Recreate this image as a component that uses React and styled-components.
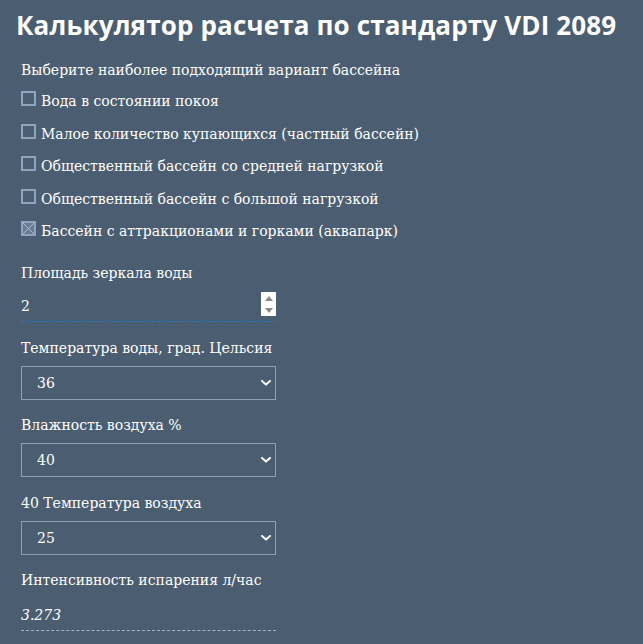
import React, { useState } from "react";
import styled, { createGlobalStyle } from "styled-components";

const GlobalStyle = createGlobalStyle`
  html, body {
    margin: 0;
    padding: 0;
    background: #4b5d70;
  }
  body {
    font-family: "DejaVu Serif", serif;
    color: #ffffff;
  }
`;

const options = [
  "Вода в состоянии покоя",
  "Малое количество купающихся (частный бассейн)",
  "Общественный бассейн со средней нагрузкой",
  "Общественный бассейн с большой нагрузкой",
  "Бассейн с аттракционами и горками (аквапарк)",
];

export default function App() {
  const [checked, setChecked] = useState(4);
  const [area, setArea] = useState("2");
  const [water, setWater] = useState("36");
  const [humidity, setHumidity] = useState("40");
  const [air, setAir] = useState("25");

  return (
    <>
      <GlobalStyle />
      <Page>
        <Title>Калькулятор расчета по стандарту VDI 2089</Title>
        <Form>
          <Prompt>Выберите наиболее подходящий вариант бассейна</Prompt>
          <Options>
            {options.map((text, i) => (
              <Option key={text}>
                <Box
                  type="checkbox"
                  checked={checked === i}
                  onChange={() => setChecked(i)}
                />
                <span>{text}</span>
              </Option>
            ))}
          </Options>

          <Field $first>
            <Label>Площадь зеркала воды</Label>
            <NumberRow>
              <NumberInput
                value={area}
                onChange={(e) => setArea(e.target.value)}
              />
              <Spinner>
                <Arrow $up />
                <Arrow />
              </Spinner>
            </NumberRow>
          </Field>

          <Field>
            <Label>Температура воды, град. Цельсия</Label>
            <SelectWrap>
              <Select value={water} onChange={(e) => setWater(e.target.value)}>
                {["26", "28", "30", "32", "34", "36"].map((v) => (
                  <option key={v}>{v}</option>
                ))}
              </Select>
              <Chevron />
            </SelectWrap>
          </Field>

          <Field>
            <Label>Влажность воздуха %</Label>
            <SelectWrap>
              <Select
                value={humidity}
                onChange={(e) => setHumidity(e.target.value)}
              >
                {["40", "50", "60", "70"].map((v) => (
                  <option key={v}>{v}</option>
                ))}
              </Select>
              <Chevron />
            </SelectWrap>
          </Field>

          <Field>
            <Label>{humidity} Температура воздуха</Label>
            <SelectWrap>
              <Select value={air} onChange={(e) => setAir(e.target.value)}>
                {["25", "26", "28", "30", "32"].map((v) => (
                  <option key={v}>{v}</option>
                ))}
              </Select>
              <Chevron />
            </SelectWrap>
          </Field>

          <Field>
            <Label>Интенсивность испарения л/час</Label>
            <Result>3.273</Result>
          </Field>
        </Form>
      </Page>
    </>
  );
}

function Chevron() {
  return (
    <ChevronIcon viewBox="0 0 10 6" aria-hidden="true">
      <path
        d="M1 1 L5 4.6 L9 1"
        fill="none"
        stroke="#ffffff"
        strokeWidth="2"
        strokeLinecap="round"
        strokeLinejoin="round"
      />
    </ChevronIcon>
  );
}

const Page = styled.div`
  padding: 9px 16px 20px;
`;

const Title = styled.h1`
  margin: 0;
  font-family: "Open Sans", "Noto Sans", sans-serif;
  font-weight: 700;
  font-size: 26px;
  line-height: 32px;
  color: #ffffff;
  letter-spacing: 0.15px;
`;

const Form = styled.div`
  padding-left: 5px;
  margin-top: 19px;
  font-size: 14px;
  line-height: 20px;
`;

const Prompt = styled.div`
  margin-bottom: 11px;
`;

const Options = styled.div`
  display: flex;
  flex-direction: column;
  gap: 12.5px;
`;

const Option = styled.label`
  display: flex;
  align-items: flex-end;
  gap: 5px;
  height: 20px;
  cursor: pointer;
`;

const Box = styled.input`
  appearance: none;
  margin: 0 0 5px;
  width: 15px;
  height: 15px;
  box-sizing: border-box;
  border: 2px solid #8ea5c0;
  background: transparent;
  flex: none;
  cursor: pointer;

  &:checked {
    background: #687d94;
    background-image: linear-gradient(
        45deg,
        transparent calc(50% - 0.6px),
        #a9bbd0 calc(50% - 0.6px),
        #a9bbd0 calc(50% + 0.6px),
        transparent calc(50% + 0.6px)
      ),
      linear-gradient(
        -45deg,
        transparent calc(50% - 0.6px),
        #a9bbd0 calc(50% - 0.6px),
        #a9bbd0 calc(50% + 0.6px),
        transparent calc(50% + 0.6px)
      );
  }
`;

const Field = styled.div`
  margin-top: ${(p) => (p.$first ? "22px" : "15.5px")};
  width: 255px;
`;

const Label = styled.div`
  margin-bottom: 8px;
  white-space: nowrap;
`;

const NumberRow = styled.div`
  display: flex;
  align-items: center;
  margin-top: 4px;
  height: 30px;
  border-bottom: 1px dashed #1e78cc;
`;

const NumberInput = styled.input`
  flex: 1;
  min-width: 0;
  border: 0;
  padding: 0;
  margin: 0;
  background: transparent;
  color: #ffffff;
  font-family: inherit;
  font-size: 14px;
  outline: none;
`;

const Spinner = styled.div`
  display: flex;
  flex-direction: column;
  justify-content: space-around;
  align-items: center;
  width: 15px;
  height: 24px;
  margin-bottom: 4px;
  background: #ffffff;
`;

const Arrow = styled.span`
  width: 0;
  height: 0;
  border-left: 4.5px solid transparent;
  border-right: 4.5px solid transparent;
  ${(p) =>
    p.$up
      ? "border-bottom: 5px solid #8a8a8a;"
      : "border-top: 5px solid #8a8a8a;"}
`;

const SelectWrap = styled.div`
  position: relative;
`;

const Select = styled.select`
  appearance: none;
  display: block;
  width: 100%;
  height: 34px;
  box-sizing: border-box;
  padding: 0 30px 0 15px;
  border: 1px solid #8aa1bc;
  border-radius: 0;
  background: transparent;
  color: #ffffff;
  font-family: inherit;
  font-size: 14px;
  outline: none;

  option {
    color: #222;
  }
`;

const ChevronIcon = styled.svg`
  position: absolute;
  right: 5px;
  top: 14px;
  width: 10px;
  height: 6px;
  pointer-events: none;
`;

const Result = styled.div`
  margin-top: 12px;
  height: 28px;
  line-height: 26px;
  font-style: italic;
  border-bottom: 1px dashed #a6b4c4;
`;
